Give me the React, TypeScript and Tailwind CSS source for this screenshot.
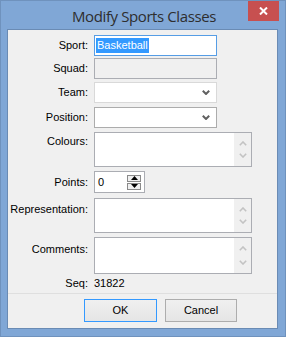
import React from "react";

const Chevron = ({ up = false, color = "#606060", w = 8, h = 5, sw = 2 }: { up?: boolean; color?: string; w?: number; h?: number; sw?: number }) => (
  <svg width={w} height={h} viewBox={`0 0 ${w} ${h}`} className="block">
    {up ? (
      <polyline points={`0.8,${h - 0.8} ${w / 2},1 ${w - 0.8},${h - 0.8}`} fill="none" stroke={color} strokeWidth={sw} />
    ) : (
      <polyline points={`0.8,0.8 ${w / 2},${h - 1} ${w - 0.8},0.8`} fill="none" stroke={color} strokeWidth={sw} />
    )}
  </svg>
);

const ScrollStrip = () => (
  <div className="w-[17px] h-full bg-[#f0f0f0] flex flex-col items-center justify-between py-[8px]">
    <Chevron up color="#c3c3c3" w={8} h={5} sw={1.6} />
    <Chevron color="#c3c3c3" w={8} h={5} sw={1.6} />
  </div>
);

const Label = ({ children, cls = "" }: { children: React.ReactNode; cls?: string }) => (
  <div className={`w-[80px] text-right leading-[13px] ${cls}`}>{children}</div>
);

export default function App() {
  return (
    <div className="w-[286px] h-[337px] bg-[#80a7d6] border border-[#6f92bd] flex flex-col font-['Liberation_Sans',Arial,sans-serif] text-[11px] text-black">
      {/* Title bar */}
      <div className="relative h-[28px] flex items-center justify-center">
        <span className="text-[15px] text-[#2e2e2e] leading-none mt-[2px] ml-[2px] font-['Open_Sans',sans-serif] tracking-[-0.4px]">Modify Sports Classes</span>
        <div className="absolute right-[6px] top-0 w-[31px] h-[20px] bg-[#c75050] flex items-center justify-center">
          <svg width="9" height="8" viewBox="0 0 9 8">
            <path d="M1 0.5 L8 7.5 M8 0.5 L1 7.5" stroke="#ffffff" strokeWidth="2" fill="none" />
          </svg>
        </div>
      </div>
      {/* Client */}
      <div className="ml-[6px] mr-[7px] h-[300px] border border-[#6a8bb4] bg-[#f0f0f0] flex flex-col">
        {/* Sport */}
        <div className="flex items-center mt-[5px]">
          <Label>Sport:</Label>
          <div className="ml-[6px] w-[123px] h-[21px] border border-[#569de5] bg-white flex items-center pl-[1px]">
            <span className="bg-[#3399ff] text-white leading-[15px] px-[1px]">Basketball</span>
          </div>
        </div>
        {/* Squad */}
        <div className="flex items-center mt-[2px]">
          <Label>Squad:</Label>
          <div className="ml-[6px] w-[123px] h-[21px] border border-[#abadb3] bg-[#f0f0f0]" />
        </div>
        {/* Team */}
        <div className="flex items-center mt-[3px]">
          <Label>Team:</Label>
          <div className="ml-[6px] w-[123px] h-[21px] border border-[#d9d9d9] bg-white flex items-center justify-end pr-[6px]">
            <Chevron />
          </div>
        </div>
        {/* Position */}
        <div className="flex items-center mt-[4px]">
          <Label>Position:</Label>
          <div className="ml-[6px] w-[123px] h-[21px] border border-[#acacac] bg-white flex items-center justify-end pr-[6px]">
            <Chevron />
          </div>
        </div>
        {/* Colours */}
        <div className="flex items-start mt-[4px]">
          <Label cls="mt-[3px]">Colours:</Label>
          <div className="ml-[6px] w-[158px] h-[35px] border border-[#abadb3] bg-white flex justify-end">
            <ScrollStrip />
          </div>
        </div>
        {/* Points */}
        <div className="flex items-center mt-[4px]">
          <Label>Points:</Label>
          <div className="ml-[6px] w-[51px] h-[22px] border border-[#abadb3] bg-white flex items-center justify-between pl-[3px] pr-[3px]">
            <span className="leading-[13px]">0</span>
            <div className="flex flex-col gap-[1px]">
              <div className="w-[14px] h-[7px] border border-[#8a8a8a] bg-[#f0f0f0] flex items-center justify-center">
                <svg width="7" height="4" viewBox="0 0 7 4"><polygon points="0,4 3.5,0 7,4" fill="#000" /></svg>
              </div>
              <div className="w-[14px] h-[7px] border border-[#8a8a8a] bg-[#f0f0f0] flex items-center justify-center">
                <svg width="7" height="4" viewBox="0 0 7 4"><polygon points="0,0 3.5,4 7,0" fill="#000" /></svg>
              </div>
            </div>
          </div>
        </div>
        {/* Representation */}
        <div className="flex items-start mt-[5px]">
          <Label cls="mt-[5px]">Representation:</Label>
          <div className="ml-[6px] w-[158px] h-[35px] border border-[#abadb3] bg-white flex justify-end">
            <ScrollStrip />
          </div>
        </div>
        {/* Comments */}
        <div className="flex items-start mt-[4px]">
          <Label cls="mt-[6px]">Comments:</Label>
          <div className="ml-[6px] w-[158px] h-[37px] border border-[#abadb3] bg-white flex justify-end">
            <ScrollStrip />
          </div>
        </div>
        {/* Seq */}
        <div className="flex items-center mt-[3px]">
          <Label>Seq:</Label>
          <div className="ml-[6px] leading-[13px]">31822</div>
        </div>
        {/* Separator */}
        <div className="mt-[3px] h-px bg-[#dfdfdf]" />
        {/* Buttons */}
        <div className="flex mt-[5px] pl-[76px] gap-[8px]">
          <div className="w-[73px] h-[23px] border border-[#3399ff] bg-[linear-gradient(#f0f0f0,#e5e5e5)] flex items-center justify-center">OK</div>
          <div className="w-[72px] h-[23px] border border-[#adadad] bg-[linear-gradient(#f0f0f0,#e5e5e5)] flex items-center justify-center">Cancel</div>
        </div>
      </div>
    </div>
  );
}
